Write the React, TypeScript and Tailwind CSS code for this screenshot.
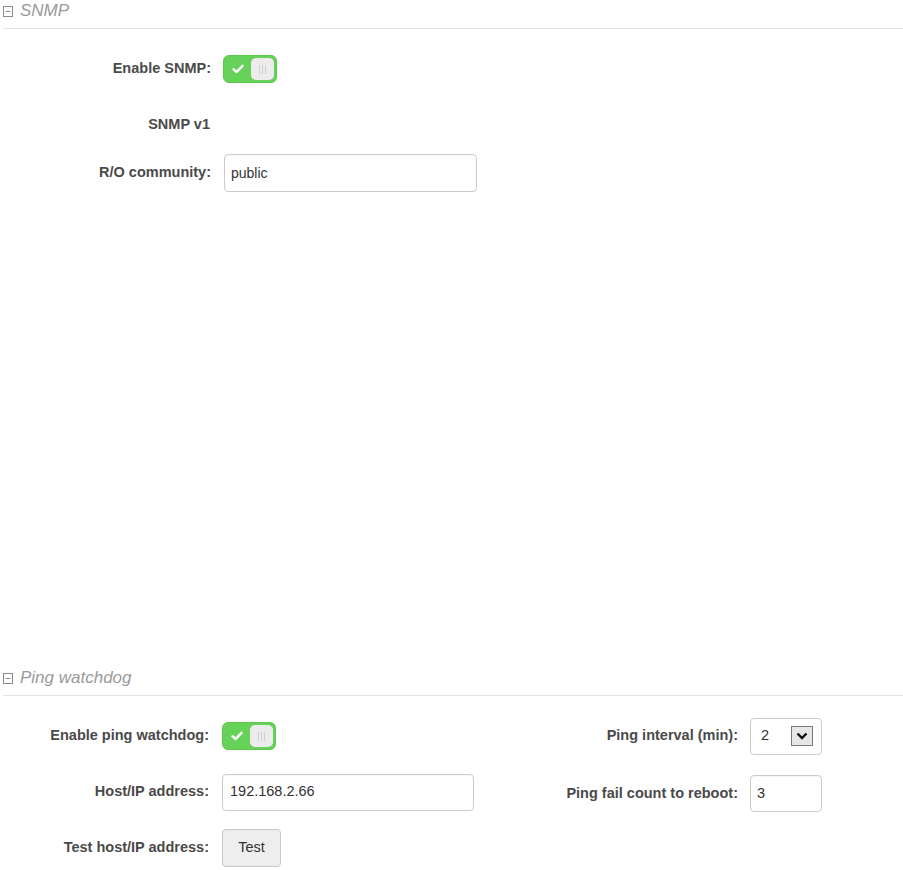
import React from 'react';

const font = { fontFamily: '"Liberation Sans", Arial, sans-serif' };

const SectionHeader: React.FC<{ title: string }> = ({ title }) => (
    <div className="h-[29px] ml-[3px] border-b border-[#e3e3e3] flex items-start">
        <div className="flex items-center h-[20px] mt-[1px]">
            <svg width="10" height="11" viewBox="0 0 10 11" className="mt-[1px]">
                <rect x="0.5" y="0.5" width="9" height="10" fill="none" stroke="#8a8a8a" />
                <line x1="2.5" y1="5.5" x2="7.5" y2="5.5" stroke="#8a8a8a" />
            </svg>
            <span className="ml-[7px] text-[17px] leading-[20px] italic text-[#9a9a9a]">{title}</span>
        </div>
    </div>
);

const Toggle: React.FC = () => (
    <div className="w-[54px] h-[28px] rounded-[6px] bg-[#67d25a] border border-[#5cc64f] flex items-center justify-between pl-[8px] pr-[2px]">
        <svg width="12" height="10" viewBox="0 0 12 10">
            <path d="M1.5 5.2 L4.6 8 L10.5 1.8" fill="none" stroke="#ffffff" strokeWidth="2.4" strokeLinecap="round" strokeLinejoin="round" />
        </svg>
        <div className="w-[23px] h-[22px] rounded-[5px] bg-[#ececec] flex items-center justify-center gap-[2px]">
            <span className="w-px h-[9px] bg-[#cfcfcf]" />
            <span className="w-px h-[9px] bg-[#cfcfcf]" />
            <span className="w-px h-[9px] bg-[#cfcfcf]" />
        </div>
    </div>
);

const Label: React.FC<{ text: string; className: string }> = ({ text, className }) => (
    <div className={`text-right text-[14.5px] font-bold text-[#4a4a4a] shrink-0 ${className}`}>{text}</div>
);

const TextBox: React.FC<{ value: string; className: string }> = ({ value, className }) => (
    <div className={`border border-[#cccccc] rounded-[4px] bg-white flex items-center px-[6px] text-[#333] shadow-[inset_0_1px_1px_rgba(0,0,0,0.04)] ${className}`}>
        {value}
    </div>
);

const App: React.FC = () => {
    return (
        <div className="w-[903px] h-[870px] bg-white overflow-hidden" style={font}>
            {/* SNMP */}
            <div className="h-[667px]">
                <SectionHeader title="SNMP" />
                <div className="mt-[26px] h-[28px] flex items-center">
                    <Label text="Enable SNMP:" className="w-[211px]" />
                    <div className="ml-[12px]"><Toggle /></div>
                </div>
                <div className="mt-[32px] h-[20px] flex items-center">
                    <Label text="SNMP v1" className="w-[210px]" />
                </div>
                <div className="mt-[19px] h-[38px] flex items-center">
                    <Label text="R/O community:" className="w-[211px]" />
                    <TextBox value="public" className="ml-[13px] w-[253px] h-[38px] text-[14px]" />
                </div>
            </div>

            {/* Ping watchdog */}
            <SectionHeader title="Ping watchdog" />
            <div className="flex pt-[20px]">
                <div className="w-[475px] flex flex-col gap-[16px]">
                    <div className="h-[40px] flex items-center">
                        <Label text="Enable ping watchdog:" className="w-[209px]" />
                        <div className="ml-[13px]"><Toggle /></div>
                    </div>
                    <div className="h-[40px] flex items-center">
                        <Label text="Host/IP address:" className="w-[209px]" />
                        <TextBox value="192.168.2.66" className="ml-[13px] w-[252px] h-[37px] text-[14.5px] pl-[7px]" />
                    </div>
                    <div className="h-[40px] flex items-center">
                        <Label text="Test host/IP address:" className="w-[209px]" />
                        <button className="ml-[13px] w-[59px] h-[38px] rounded-[4px] border border-[#c9c9c9] bg-[#eeeeee] text-[14.5px] text-[#333]">
                            Test
                        </button>
                    </div>
                </div>
                <div className="flex-1 flex flex-col gap-[16px]">
                    <div className="h-[40px] flex items-center">
                        <Label text="Ping interval (min):" className="w-[263px]" />
                        <div className="ml-[12px] w-[72px] h-[37px] border border-[#cccccc] rounded-[4px] bg-white flex items-center justify-between pl-[10px] pr-[8px] text-[14.5px] text-[#333]">
                            <span>2</span>
                            <div className="w-[22px] h-[20px] border border-[#7a7a7a] bg-[#e6e6e6] flex items-center justify-center">
                                <svg width="12" height="8" viewBox="0 0 12 8">
                                    <path d="M1.5 1.5 L6 6 L10.5 1.5" fill="none" stroke="#111" strokeWidth="2.4" />
                                </svg>
                            </div>
                        </div>
                    </div>
                    <div className="h-[40px] flex items-center pt-[3px]">
                        <Label text="Ping fail count to reboot:" className="w-[263px]" />
                        <TextBox value="3" className="ml-[12px] w-[72px] h-[37px] text-[14.5px]" />
                    </div>
                </div>
            </div>
        </div>
    );
};

export default App;
